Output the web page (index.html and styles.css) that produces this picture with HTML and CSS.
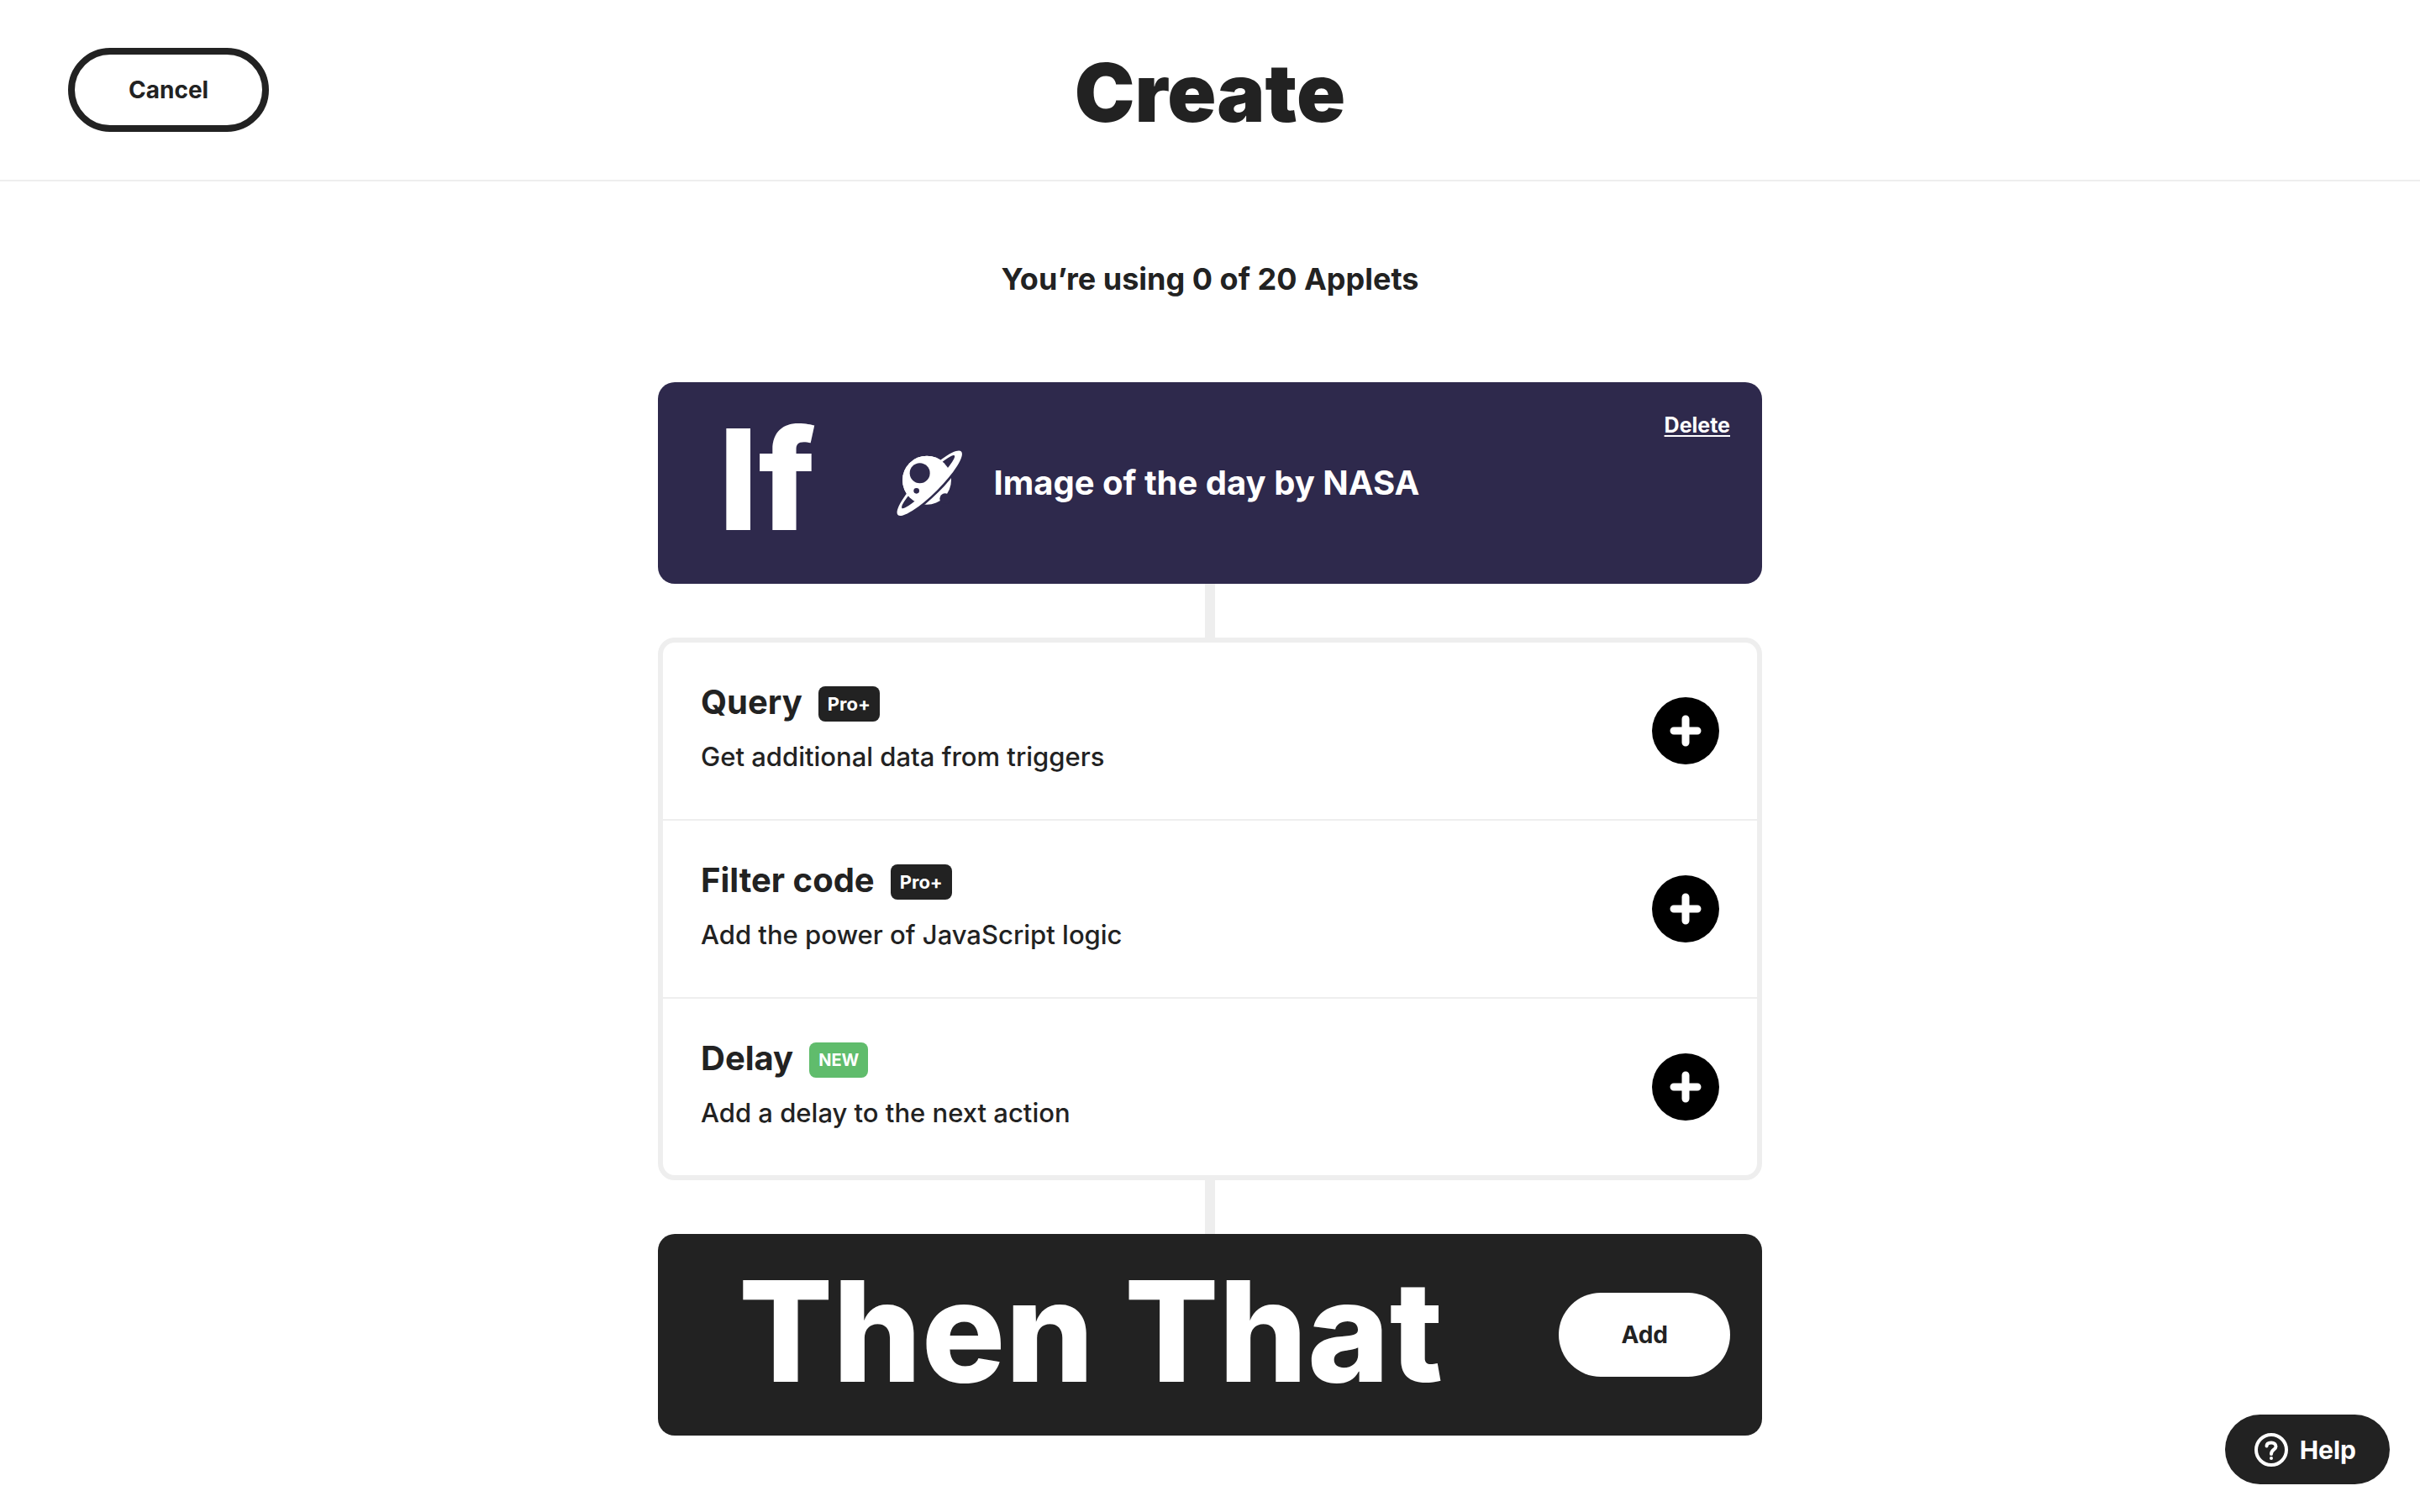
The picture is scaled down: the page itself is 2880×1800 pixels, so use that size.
FILE: index.html
```html
<!DOCTYPE html>
<html lang="en">
<head>
<meta charset="utf-8">
<meta name="viewport" content="width=device-width, initial-scale=1">
<title>Create</title>
<link rel="stylesheet" href="styles.css">
</head>
<body>
<header class="topbar">
  <button class="pill pill-outline" type="button">Cancel</button>
  <h1 class="page-title">Create</h1>
</header>

<main class="composer">
  <p class="usage">You’re using 0 of 20 Applets</p>

  <section class="card trigger">
    <h2 class="word">If</h2>
    <svg class="planet" viewBox="81 44 240 240" aria-hidden="true">
      <defs>
        <clipPath id="upper-half"><rect x="-200" y="-200" width="400" height="215" transform="translate(201 164) rotate(-45)"/></clipPath>
      </defs>
      <circle class="ink" cx="192" cy="154" r="87"/>
      <circle class="cut" cx="257" cy="220" r="19"/>
      <g transform="translate(201 164) rotate(-45)">
        <ellipse class="cut" cx="0" cy="7" rx="158" ry="39"/>
        <ellipse class="ink" cx="0" cy="1" rx="160" ry="37"/>
        <ellipse class="cut" cx="0" cy="-6" rx="133" ry="19"/>
      </g>
      <g clip-path="url(#upper-half)"><circle class="ink" cx="192" cy="154" r="87"/></g>
      <circle class="cut" cx="167" cy="129" r="36"/>
      <circle class="cut" cx="155" cy="192" r="10"/>
    </svg>
    <p class="trigger-name">Image of the day by NASA</p>
    <a class="delete" href="#delete">Delete</a>
  </section>

  <div class="connector"></div>

  <ul class="steps">
    <li class="step">
      <div class="step-text">
        <h3 class="step-title">Query <span class="badge">Pro+</span></h3>
        <p class="step-note">Get additional data from triggers</p>
      </div>
      <button class="plus" type="button" aria-label="Add query">
        <svg viewBox="0 0 80 80" aria-hidden="true"><path d="M40 26V54M26 40H54"/></svg>
      </button>
    </li>
    <li class="step">
      <div class="step-text">
        <h3 class="step-title">Filter code <span class="badge">Pro+</span></h3>
        <p class="step-note">Add the power of JavaScript logic</p>
      </div>
      <button class="plus" type="button" aria-label="Add filter code">
        <svg viewBox="0 0 80 80" aria-hidden="true"><path d="M40 26V54M26 40H54"/></svg>
      </button>
    </li>
    <li class="step">
      <div class="step-text">
        <h3 class="step-title">Delay <span class="badge badge-new">NEW</span></h3>
        <p class="step-note">Add a delay to the next action</p>
      </div>
      <button class="plus" type="button" aria-label="Add delay">
        <svg viewBox="0 0 80 80" aria-hidden="true"><path d="M40 26V54M26 40H54"/></svg>
      </button>
    </li>
  </ul>

  <div class="connector"></div>

  <section class="card action">
    <h2 class="word">Then That</h2>
    <button class="pill pill-light" type="button">Add</button>
  </section>
</main>

<button class="help" type="button">
  <svg class="help-icon" viewBox="0 0 40 40" aria-hidden="true">
    <circle class="help-ring" cx="20" cy="20" r="18"/>
    <path class="help-mark" d="M14.500 15.500C14.500 12.500 17 11.500 20 11.500C23.500 11.500 25.500 13.500 25.500 16C25.500 20 20 19.500 20 25"/>
    <circle class="help-dot" cx="20" cy="30" r="2"/>
  </svg>
  Help
</button>
</body>
</html>
```
FILE: styles.css
```css
:root {
  --ink: #222;
  --line: #eee;
  --night: #2e294c;
  --green: #60bc6c;
}

* { box-sizing: border-box; }

body {
  margin: 0;
  min-height: 100vh;
  background: #fff;
  color: var(--ink);
  font-family: Inter, "Liberation Sans", sans-serif;
  font-weight: 700;
}

h1, h2, h3, p, ul { margin: 0; padding: 0; }

button {
  font: inherit;
  border: 0;
  cursor: pointer;
}

/* Header */
.topbar {
  display: grid;
  grid-template-columns: 1fr auto 1fr;
  align-items: center;
  padding: 56px 81px;
  border-bottom: 2px solid var(--line);
}

.page-title {
  padding-top: 6px;
  font-size: 96px;
  line-height: 96px;
  font-weight: 900;
}

.pill {
  height: 100px;
  padding: 0 74px;
  border-radius: 50px;
  font-size: 28px;
  line-height: 36px;
}

.pill-outline {
  justify-self: start;
  padding: 0 64px;
  border: 8px solid var(--ink);
  background: #fff;
  color: var(--ink);
}

.pill-light {
  margin-left: auto;
  background: #fff;
  color: var(--ink);
}

/* Applet composer */
.composer {
  width: 100%;
  max-width: 1314px;
  margin: 0 auto;
  padding: 92px 0;
}

.usage {
  margin-bottom: 99px;
  font-size: 36px;
  line-height: 48px;
  text-align: center;
}

.card {
  display: flex;
  align-items: center;
  min-height: 240px;
  padding-right: 38px;
  border-radius: 20px;
  color: #fff;
}

.word {
  padding-bottom: 8px;
  font-size: 166px;
  line-height: 200px;
  font-weight: 800;
}

.trigger {
  padding-left: 72px;
  background: var(--night);
}

.planet {
  width: 80px;
  height: 80px;
  margin: 0 36px 0 96px;
}

.planet .ink { fill: #fff; }
.planet .cut { fill: var(--night); }

.trigger-name {
  font-size: 40px;
  line-height: 56px;
}

.delete {
  align-self: flex-start;
  margin: 35px 0 0 auto;
  color: #fff;
  font-size: 25px;
  line-height: 32px;
  text-decoration-thickness: 2px;
  text-underline-offset: 3px;
}

.action {
  padding-left: 96px;
  background: var(--ink);
}

.connector {
  width: 12px;
  height: 64px;
  margin: 0 auto;
  background: var(--line);
}

.steps {
  border: 6px solid var(--line);
  border-radius: 20px;
  list-style: none;
}

.step {
  display: flex;
  align-items: center;
  justify-content: space-between;
  min-height: 210px;
  padding: 0 45px;
}

.step + .step {
  min-height: 212px;
  border-top: 2px solid var(--line);
}

.step-text { padding-bottom: 9px; }

.step-title {
  display: flex;
  align-items: center;
  gap: 19px;
  font-size: 40px;
  line-height: 56px;
}

.badge {
  margin-top: 4px;
  padding: 0 11px;
  border-radius: 8px;
  background: var(--ink);
  color: #fff;
  font-size: 22px;
  line-height: 42px;
}

.badge-new {
  background: var(--green);
  font-size: 20px;
}

.step-note {
  margin-top: 15px;
  font-size: 31px;
  line-height: 44px;
  font-weight: 500;
}

.plus {
  width: 80px;
  height: 80px;
  padding: 0;
  border-radius: 50%;
  background: #000;
}

.plus svg { display: block; }

.plus path {
  fill: none;
  stroke: #fff;
  stroke-width: 9;
  stroke-linecap: round;
}

/* Floating help button */
.help {
  position: fixed;
  right: 36px;
  bottom: 33px;
  display: flex;
  align-items: center;
  gap: 14px;
  height: 83px;
  padding: 0 40px 0 35px;
  border-radius: 42px;
  background: var(--ink);
  color: #fff;
  font-size: 30px;
  line-height: 36px;
}

.help-icon {
  width: 40px;
  height: 40px;
}

.help-ring {
  fill: none;
  stroke: #fff;
  stroke-width: 4;
}

.help-mark {
  fill: none;
  stroke: #fff;
  stroke-width: 4;
  stroke-linecap: round;
}

.help-dot { fill: #fff; }
```
